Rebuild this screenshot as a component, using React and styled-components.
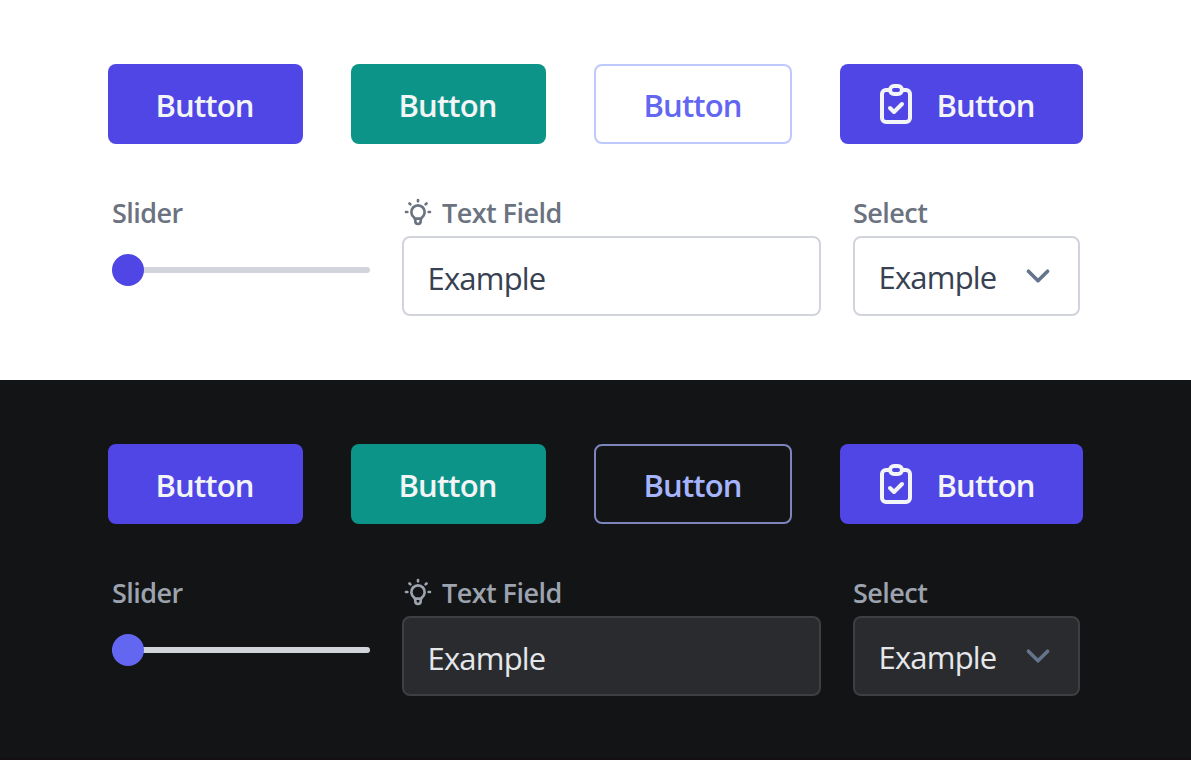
import React from "react";
import styled, { createGlobalStyle, ThemeProvider } from "styled-components";

const light = {
  bg: "#ffffff", label: "#6b7280", outline: "#c0c9fe", outlineText: "#6366f1",
  thumb: "#4f46e5", field: "#ffffff", fieldBorder: "#d1d5db", text: "#374151", rule: "#ffffff",
};
const dark = {
  bg: "#131415", label: "#9ca3af", outline: "#7c86bd", outlineText: "#a5b4fc",
  thumb: "#6366f1", field: "#2a2b2e", fieldBorder: "#3e3f41", text: "#e5e7eb", rule: "#160f11",
};

const Global = createGlobalStyle`
  *, *::before, *::after { box-sizing: border-box; }
  body { margin: 0; background: #fff; overflow: hidden; }
  body, button, input { font-family: "Segoe UI", "Open Sans", "Noto Sans", sans-serif; }
`;
const Panel = styled.section`
  height: 380px;
  padding: 64px 108px 0;
  background: ${(p) => p.theme.bg};
  border-bottom: 2px solid ${(p) => p.theme.rule};
`;
const ButtonRow = styled.div`
  display: flex;
  gap: 48px;
`;
const fills = { primary: "#4f46e5", secondary: "#0d9488", outline: "transparent" };
const Button = styled.button`
  display: flex;
  align-items: center;
  justify-content: flex-start;
  gap: 16.5px;
  flex: none;
  width: ${(p) => p.$width}px;
  height: 80px;
  padding: 2px 0 0 ${(p) => (p.$icon ? 32 : 47.5)}px;
  border: ${(p) => (p.$kind === "outline" ? `2px solid ${p.theme.outline}` : "0")};
  border-radius: 8px;
  background: ${(p) => fills[p.$kind]};
  color: ${(p) => (p.$kind === "outline" ? p.theme.outlineText : "#f3f4f6")};
  font-size: 31px;
  font-weight: 600;
  letter-spacing: -0.85px;
  line-height: 48px;
  svg { margin-top: -2px; }
`;
const Controls = styled.div`
  display: flex;
  gap: 32px;
  margin-top: 48px;
  padding: 0 4px;
`;
const Control = styled.div`
  display: flex;
  flex-direction: column;
  flex: none;
  width: ${(p) => p.$width}px;
`;
const Label = styled.label`
  display: flex;
  align-items: center;
  gap: 8px;
  height: 44px;
  padding-bottom: 2px;
  color: ${(p) => p.theme.label};
  font-size: 27px;
  font-weight: 600;
  letter-spacing: -0.55px;
  line-height: 40px;
  white-space: nowrap;
  svg { margin-top: -2px; }
`;
const Track = styled.div`
  display: flex;
  align-items: center;
  height: 6px;
  margin-top: 31px;
  border-radius: 3px;
  background: #d1d5db;
`;
const Thumb = styled.span`
  width: 32px;
  height: 32px;
  flex: none;
  border-radius: 50%;
  background: ${(p) => p.theme.thumb};
`;
const Field = styled.div`
  display: flex;
  align-items: center;
  justify-content: space-between;
  height: 80px;
  padding: ${(p) => (p.$select ? "2px 16px 0 23.5px" : "4px 24px 0 23.5px")};
  border: 2px solid ${(p) => p.theme.fieldBorder};
  border-radius: 8px;
  background: ${(p) => p.theme.field};
  color: ${(p) => p.theme.text};
  font-size: 31px;
  letter-spacing: -0.8px;
  line-height: 48px;
`;
const Stroke = styled.svg`
  flex: none;
  fill: none;
  stroke: currentColor;
  stroke-width: 2;
  stroke-linecap: round;
  stroke-linejoin: round;
`;
const Chevron = styled(Stroke)`
  margin-top: -2px;
  stroke: #64748b;
  stroke-width: 1.5;
`;

const ClipboardIcon = () => (
  <Stroke width="48" height="48" viewBox="0 0 24 24">
    <path d="M9 5H7a2 2 0 0 0-2 2v12a2 2 0 0 0 2 2h10a2 2 0 0 0 2-2V7a2 2 0 0 0-2-2h-2" />
    <rect x="9" y="3" width="6" height="4" rx="2" />
    <path d="M9 14l2 2 4-4" />
  </Stroke>
);
const BulbIcon = () => (
  <Stroke width="32" height="32" viewBox="0 0 24 24">
    <path d="M3 12h1M12 3v1M20 12h1M5.6 5.6l.7.7M18.4 5.6l-.7.7" />
    <path d="M9 16a5 5 0 1 1 6 0a3.5 3.5 0 0 0-1 3a2 2 0 0 1-4 0a3.5 3.5 0 0 0-1-3" />
    <path d="M9.7 17h4.6" />
  </Stroke>
);

function Showcase({ theme }) {
  return (
    <ThemeProvider theme={theme}>
      <Panel>
        <ButtonRow>
          <Button $kind="primary" $width={195}>Button</Button>
          <Button $kind="secondary" $width={195}>Button</Button>
          <Button $kind="outline" $width={198}>Button</Button>
          <Button $kind="primary" $width={243} $icon><ClipboardIcon />Button</Button>
        </ButtonRow>
        <Controls>
          <Control $width={258}>
            <Label>Slider</Label>
            <Track><Thumb /></Track>
          </Control>
          <Control $width={419}>
            <Label><BulbIcon />Text Field</Label>
            <Field>Example</Field>
          </Control>
          <Control $width={227}>
            <Label>Select</Label>
            <Field $select>
              Example
              <Chevron width="48" height="48" viewBox="0 0 20 20"><path d="M6 8l4 4 4-4" /></Chevron>
            </Field>
          </Control>
        </Controls>
      </Panel>
    </ThemeProvider>
  );
}

export default function App() {
  return (
    <>
      <Global />
      <Showcase theme={light} />
      <Showcase theme={dark} />
    </>
  );
}
